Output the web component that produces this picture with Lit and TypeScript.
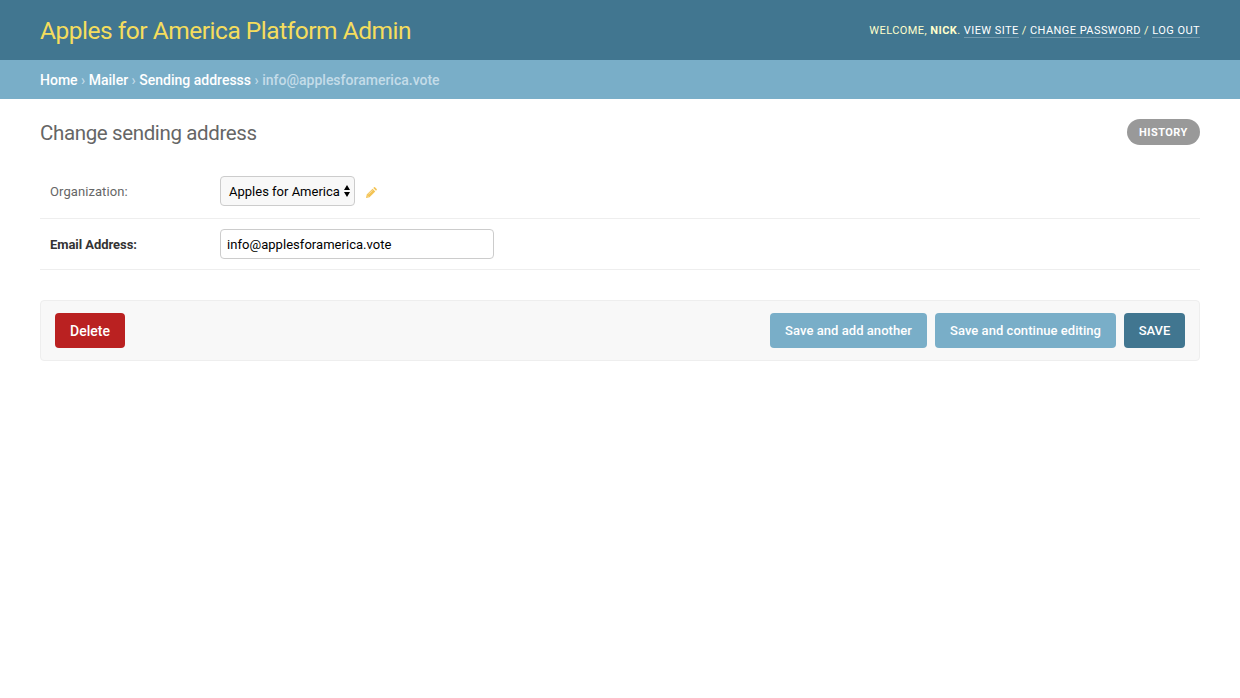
import { LitElement, html, css } from "lit";
import { customElement, property } from "lit/decorators.js";

@customElement("admin-header")
class AdminHeader extends LitElement {
  static styles = css`
    :host { display: flex; justify-content: space-between; align-items: center; height: 60px; padding: 0 40px; box-sizing: border-box; background: #417690; color: #ffc; }
    .brand { margin: 0; padding-top: 1px; font-size: 24.5px; font-weight: 400; letter-spacing: -0.48px; line-height: 30px; color: #f5dd5d; white-space: nowrap; }
    .tools { font-size: 11px; line-height: 13px; letter-spacing: 0.44px; text-transform: uppercase; white-space: nowrap; }
    .tools strong { font-weight: 700; }
    .tools a { color: #fff; border-bottom: 1px solid rgba(255, 255, 255, 0.25); text-decoration: none; }
  `;
  render() {
    return html`<h1 class="brand">Apples for America Platform Admin</h1>
      <div class="tools">Welcome, <strong>Nick</strong>. <a>View site</a> / <a>Change password</a> / <a>Log out</a></div>`;
  }
}

@customElement("admin-breadcrumbs")
class AdminBreadcrumbs extends LitElement {
  @property({ attribute: false }) trail: string[] = [];
  @property() current = "";
  static styles = css`
    :host { display: flex; align-items: center; height: 39px; padding: 2px 40px 0; box-sizing: border-box; background: #79aec8; color: #c4dce8; font-size: 14px; line-height: 19px; font-weight: 500; white-space: nowrap; }
    a { color: #fff; }
  `;
  render() {
    return html`<div class="line">${this.trail.map((t) => html`<a>${t}</a> › `)}<span>${this.current}</span></div>`;
  }
}

@customElement("app-root")
class AppRoot extends LitElement {
  static styles = css`
    :host { display: block; min-height: 698px; background: #fff; color: #333; font-family: Roboto, "Liberation Sans", sans-serif; font-size: 13px; }
    .content { padding: 20px 40px; }
    .heading { display: flex; justify-content: space-between; align-items: flex-start; height: 57px; }
    .title { margin: 0; padding-top: 1px; font-size: 20.5px; line-height: 26px; font-weight: 400; letter-spacing: -0.37px; color: #666; white-space: nowrap; }
    .history { box-sizing: border-box; width: 73px; height: 26px; border-radius: 13px; background: #999; color: #fff; font-size: 11px; line-height: 27px; font-weight: 700; letter-spacing: 0.45px; text-align: center; }
    .row { display: flex; box-sizing: border-box; padding: 0 10px; border-bottom: 1px solid #eee; }
    .org { height: 43px; align-items: flex-start; }
    .email { height: 51px; align-items: center; }
    .label { width: 170px; line-height: 30px; padding-top: 1px; color: #666; letter-spacing: 0.08px; white-space: nowrap; }
    .required { padding-top: 2px; font-weight: 700; color: #333; letter-spacing: -0.06px; }
    .select { display: flex; align-items: center; justify-content: space-between; box-sizing: border-box; width: 135px; height: 30px; padding: 0 4px 0 8px; border: 1px solid #ccc; border-radius: 4px; background: #f8f8f8; color: #000; white-space: nowrap; }
    .pencil { margin: 11px 0 0 11px; }
    .input { box-sizing: border-box; width: 274px; height: 30px; padding: 0 6px; border: 1px solid #ccc; border-radius: 4px; background: #fff; color: #000; font: 400 13px Roboto, sans-serif; letter-spacing: 0.04px; outline: none; }
    .submit { display: flex; align-items: center; gap: 8px; box-sizing: border-box; height: 61px; margin-top: 30px; padding: 0 14px; border: 1px solid #eee; border-radius: 4px; background: #f8f8f8; }
    .button { box-sizing: border-box; height: 35px; border-radius: 4px; background: #79aec8; color: #fff; line-height: 35px; font-weight: 500; letter-spacing: 0.05px; text-align: center; white-space: nowrap; }
    .delete { width: 70px; margin-right: auto; background: #ba2121; font-size: 14px; letter-spacing: 0; line-height: 37px; }
    .another { width: 157px; }
    .continue { width: 181px; }
    .save { width: 61px; background: #417690; letter-spacing: -0.1px; }
  `;
  render() {
    return html`
      <admin-header></admin-header>
      <admin-breadcrumbs .trail=${["Home", "Mailer", "Sending addresss"]} current="info@applesforamerica.vote"></admin-breadcrumbs>
      <main class="content">
        <div class="heading"><h2 class="title">Change sending address</h2><a class="history">HISTORY</a></div>
        <div class="row org">
          <span class="label">Organization:</span>
          <div class="select"><span>Apples for America</span>
            <svg width="6" height="12" viewBox="0 0 6 12"><path d="M3 0L6 5H0ZM0 7H6L3 12Z" fill="#000" /></svg></div>
          <svg class="pencil" width="11" height="11" viewBox="0 0 11 11">
            <path d="M0 11L.7 7.5L6.6 1.7L9.3 4.4L3.5 10.3ZM7.3 1L8 .3Q8.5-.1 9 .3L10.7 2Q11.1 2.5 10.7 3L10 3.7Z" fill="#f2bd42" opacity=".9" />
            <path d="M2.4 7.4L6.4 3.4M1.2 8.6L2.4 9.8" stroke="#fff" stroke-width=".5" fill="none" />
          </svg>
        </div>
        <div class="row email"><span class="label required">Email Address:</span><input class="input" value="info@applesforamerica.vote" /></div>
        <div class="submit">
          <a class="button delete">Delete</a><a class="button another">Save and add another</a><a class="button continue">Save and continue editing</a><a class="button save">SAVE</a>
        </div>
      </main>`;
  }
}
